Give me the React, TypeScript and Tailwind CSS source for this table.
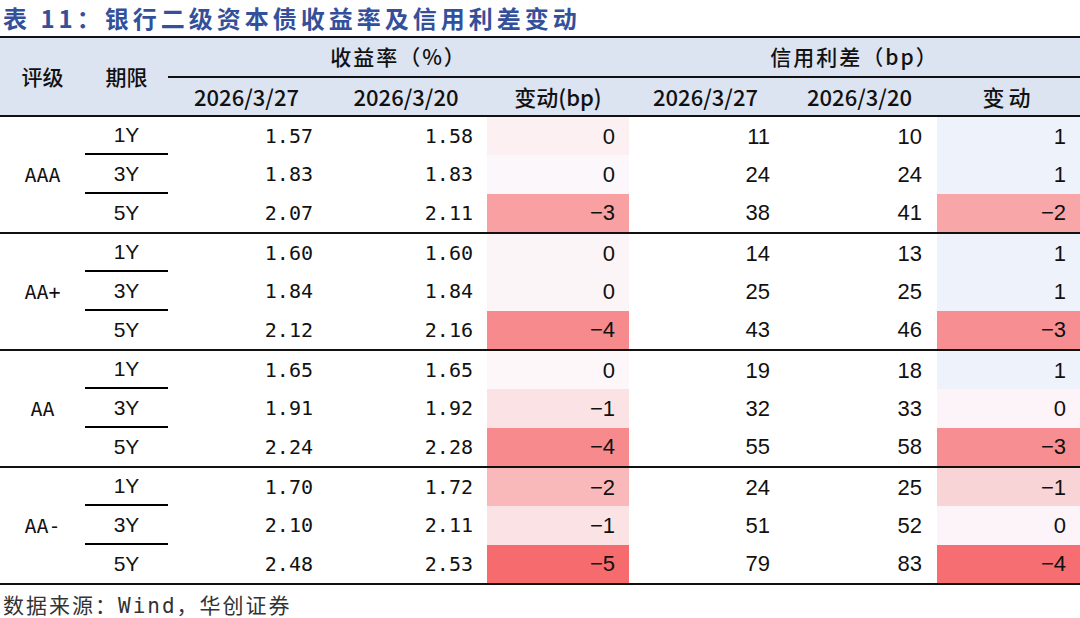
import React from 'react';

const cjk = "font-['Noto_Sans_CJK_SC',sans-serif]";
const mono = "font-['DejaVu_Sans_Mono','Noto_Sans_CJK_SC',monospace]";
const sans = "font-['Liberation_Sans',Arial,sans-serif]";

type Row = {
  tenor: string;
  y1: string;
  y2: string;
  yc: string;
  ycBg: string;
  s1: string;
  s2: string;
  sc: string;
  scBg: string;
};

type Group = { rating: string; rows: Row[] };

const groups: Group[] = [
  {
    rating: 'AAA',
    rows: [
      { tenor: '1Y', y1: '1.57', y2: '1.58', yc: '0', ycBg: 'bg-[#fdf0f3]', s1: '11', s2: '10', sc: '1', scBg: 'bg-[#eef2fb]' },
      { tenor: '3Y', y1: '1.83', y2: '1.83', yc: '0', ycBg: 'bg-[#fcf7fa]', s1: '24', s2: '24', sc: '1', scBg: 'bg-[#eef2fb]' },
      { tenor: '5Y', y1: '2.07', y2: '2.11', yc: '−3', ycBg: 'bg-[#f8a0a2]', s1: '38', s2: '41', sc: '−2', scBg: 'bg-[#f9a6a9]' },
    ],
  },
  {
    rating: 'AA+',
    rows: [
      { tenor: '1Y', y1: '1.60', y2: '1.60', yc: '0', ycBg: 'bg-[#fcf5f8]', s1: '14', s2: '13', sc: '1', scBg: 'bg-[#eef2fb]' },
      { tenor: '3Y', y1: '1.84', y2: '1.84', yc: '0', ycBg: 'bg-[#fcf5f8]', s1: '25', s2: '25', sc: '1', scBg: 'bg-[#eef2fb]' },
      { tenor: '5Y', y1: '2.12', y2: '2.16', yc: '−4', ycBg: 'bg-[#f78a8c]', s1: '43', s2: '46', sc: '−3', scBg: 'bg-[#f78e91]' },
    ],
  },
  {
    rating: 'AA',
    rows: [
      { tenor: '1Y', y1: '1.65', y2: '1.65', yc: '0', ycBg: 'bg-[#fdf7fa]', s1: '19', s2: '18', sc: '1', scBg: 'bg-[#eef2fb]' },
      { tenor: '3Y', y1: '1.91', y2: '1.92', yc: '−1', ycBg: 'bg-[#fbe2e5]', s1: '32', s2: '33', sc: '0', scBg: 'bg-[#fcf4f8]' },
      { tenor: '5Y', y1: '2.24', y2: '2.28', yc: '−4', ycBg: 'bg-[#f78a8c]', s1: '55', s2: '58', sc: '−3', scBg: 'bg-[#f78e91]' },
    ],
  },
  {
    rating: 'AA-',
    rows: [
      { tenor: '1Y', y1: '1.70', y2: '1.72', yc: '−2', ycBg: 'bg-[#f9b9bb]', s1: '24', s2: '25', sc: '−1', scBg: 'bg-[#f9d4d7]' },
      { tenor: '3Y', y1: '2.10', y2: '2.11', yc: '−1', ycBg: 'bg-[#fbe2e5]', s1: '51', s2: '52', sc: '0', scBg: 'bg-[#fcf4f8]' },
      { tenor: '5Y', y1: '2.48', y2: '2.53', yc: '−5', ycBg: 'bg-[#f66b6e]', s1: '79', s2: '83', sc: '−4', scBg: 'bg-[#f66e71]' },
    ],
  },
];

function BodyRow({ row, last }: { row: Row; last: boolean }) {
  return (
    <div className="flex flex-1 items-stretch text-[#111]">
      <div className={`w-[83px] flex items-center justify-center ${sans} text-[21px] ${last ? '' : 'border-b-2 border-black'}`}>
        {row.tenor}
      </div>
      <div className={`w-[157px] flex items-center justify-end pr-[12px] ${mono} text-[20px]`}>{row.y1}</div>
      <div className={`w-[162px] flex items-center justify-end pr-[14px] ${mono} text-[20px]`}>{row.y2}</div>
      <div className={`w-[142px] flex items-center justify-end pr-[14px] ${sans} text-[22px] ${row.ycBg}`}>{row.yc}</div>
      <div className={`w-[153px] flex items-center justify-end pr-[12px] ${sans} text-[22px]`}>{row.s1}</div>
      <div className={`w-[155px] flex items-center justify-end pr-[15px] ${sans} text-[22px]`}>{row.s2}</div>
      <div className={`w-[143px] flex items-center justify-end pr-[14px] ${sans} text-[22px] ${row.scBg}`}>{row.sc}</div>
    </div>
  );
}

export default function App() {
  return (
    <div className="w-[1080px] h-[618px] bg-white overflow-hidden">
      <div className={`h-[36px] pl-[3px] flex items-center ${cjk} text-[24px] font-bold text-[#34509a] tracking-[4px]`}>
        表 11：银行二级资本债收益率及信用利差变动
      </div>

      {/* header */}
      <div className={`flex bg-[#dce3f1] border-t-2 border-b-2 border-[#111] ${cjk} text-[#111]`}>
        <div className="w-[85px] flex items-center justify-center text-[21px] font-medium">评级</div>
        <div className="w-[83px] flex items-center justify-center text-[21px] font-medium">期限</div>
        <div className="flex-1 flex flex-col">
          <div className="h-[40px] flex items-center border-b-2 border-[#111] text-[21px] font-medium">
            <div className="w-[461px] text-center tracking-[2px]">收益率（%）</div>
            <div className="w-[451px] text-center tracking-[2px]">信用利差（bp）</div>
          </div>
          <div className="h-[37px] flex items-center text-[22px] font-medium">
            <div className="w-[157px] text-center">2026/3/27</div>
            <div className="w-[162px] text-center">2026/3/20</div>
            <div className="w-[142px] text-center">变动(bp)</div>
            <div className="w-[153px] text-center">2026/3/27</div>
            <div className="w-[155px] text-center">2026/3/20</div>
            <div className="w-[143px] text-center tracking-[4px]">变动</div>
          </div>
        </div>
      </div>

      {/* body */}
      {groups.map((g) => (
        <div key={g.rating} className="h-[117px] flex border-b-2 border-[#111]">
          <div className={`w-[85px] flex items-center justify-center ${mono} text-[20px] text-[#111]`}>{g.rating}</div>
          <div className="flex-1 flex flex-col">
            {g.rows.map((r, i) => (
              <BodyRow key={r.tenor} row={r} last={i === g.rows.length - 1} />
            ))}
          </div>
        </div>
      ))}

      <div className={`pl-[3px] pt-[4px] ${cjk} text-[21px] text-[#333] tracking-[2px]`}>
        数据来源：<span className={mono}>Wind</span>，华创证券
      </div>
    </div>
  );
}
